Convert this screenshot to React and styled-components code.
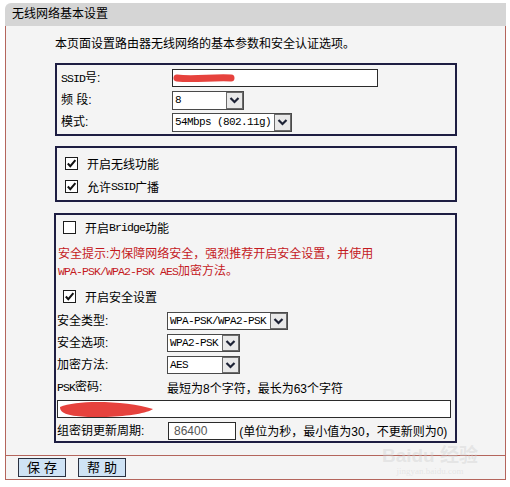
import React from "react";
import styled, { createGlobalStyle } from "styled-components";

const GlobalStyle = createGlobalStyle`
  html, body {
    margin: 0;
    padding: 0;
    background: #ffffff;
  }
  body {
    font-family: "Liberation Sans", "Noto Sans CJK SC", sans-serif;
    font-size: 12px;
    color: #000;
  }
`;

const Frame = styled.div`
  position: relative;
  width: 501px;
  margin: 3px 0 0 5px;
`;

const Header = styled.div`
  height: 23px;
  line-height: 23px;
  padding-left: 7px;
  background: #d5d5d5;
  border-top-left-radius: 6px;
  font-size: 12px;
`;

const Body = styled.div`
  background: #f4f4f4;
  border-left: 1px solid #b4655c;
  border-right: 1px solid #b4655c;
  padding: 11px 0 12px 49px;
`;

const Intro = styled.div`
  line-height: 14px;
  margin-bottom: 12px;
`;

const Panel = styled.div`
  width: ${(p) => p.width || 402}px;
  box-sizing: border-box;
  border: 2px solid #1e1e42;
  padding: ${(p) => p.pad || "0"};
  margin-top: ${(p) => p.gap || 0}px;
  margin-left: ${(p) => p.shift || 0}px;
`;

const Row = styled.div`
  display: flex;
  align-items: center;
  height: ${(p) => p.h || 22}px;
  margin-top: ${(p) => p.mt || 0}px;
`;

const Label = styled.div`
  width: ${(p) => p.w}px;
  flex: none;
  line-height: 14px;
`;

const Ascii = styled.span`
  font-family: "Liberation Mono", monospace;
  font-size: 11.5px;
  letter-spacing: -0.9px;
`;

const TextInput = styled.div`
  position: relative;
  box-sizing: border-box;
  width: ${(p) => p.w}px;
  height: 18px;
  background: #fff;
  border: 1px solid #2b2b2b;
  font-size: 12px;
  line-height: 16px;
  padding-left: 5px;
  color: #555;
  overflow: hidden;
`;

const Scribble = styled.svg`
  position: absolute;
  left: 0;
  top: 0;
  pointer-events: none;
`;

const SelectBox = styled.div`
  display: flex;
  box-sizing: border-box;
  width: ${(p) => p.w}px;
  height: ${(p) => p.h || 18}px;
  background: #fff;
  border: 1px solid #4a4a4a;
`;

const SelectValue = styled.div`
  flex: 1;
  padding-left: 2px;
  font-family: "Liberation Mono", monospace;
  font-size: 11px;
  letter-spacing: -0.6px;
  line-height: ${(p) => (p.h || 18) - 2}px;
  white-space: nowrap;
  overflow: hidden;
`;

const SelectArrow = styled.div`
  flex: none;
  width: 17px;
  box-sizing: border-box;
  border: 1px solid #6b6b6b;
  background: #e9e9e9;
  display: flex;
  align-items: center;
  justify-content: center;
`;

const CheckRow = styled.div`
  display: flex;
  align-items: center;
  height: ${(p) => p.h || 23}px;
  padding-left: ${(p) => p.indent || 8}px;
  margin-top: ${(p) => p.mt || 0}px;
`;

const Box = styled.div`
  width: 13px;
  height: 13px;
  box-sizing: border-box;
  border: 1px solid #1c1c1c;
  background: #fff;
  display: flex;
  align-items: center;
  justify-content: center;
  margin-right: 9px;
`;

const Warning = styled.div`
  color: #c41a1e;
  line-height: 17px;
  margin-top: 8px;
  padding-left: 1px;
`;

const Hint = styled.span`
  font-size: 12px;
`;

const PskField = styled(TextInput)`
  margin-top: 2px;
`;

const Footer = styled.div`
  display: flex;
  gap: 12px;
  height: 25px;
  padding: 2px 0 0 12px;
  box-sizing: border-box;
  background: #f4f4f4;
  border: 1px solid #b4655c;
`;

const Button = styled.div`
  width: 48px;
  height: 19px;
  box-sizing: border-box;
  border: 1px solid #2a3140;
  background: #cfe3f5;
  text-align: center;
  line-height: 17px;
  font-size: 13px;
  letter-spacing: 4px;
  text-indent: 4px;
`;

const Watermark = styled.div`
  position: absolute;
  right: 28px;
  bottom: 4px;
  color: rgba(205, 205, 205, 0.4);
  text-align: center;
  font-family: "Liberation Sans", "Noto Sans CJK SC", sans-serif;
  pointer-events: none;
`;

const MarkBig = styled.div`
  font-size: 19px;
  font-weight: bold;
  line-height: 21px;
`;

const MarkSmall = styled.div`
  font-size: 9px;
  line-height: 10px;
  font-family: "Liberation Serif", serif;
`;

const Chevron = () => (
  <svg width="11" height="8" viewBox="0 0 11 8">
    <path d="M1.5 2 L5.5 6 L9.5 2" fill="none" stroke="#1d2235" strokeWidth="2.2" />
  </svg>
);

const Select = ({ w, h, value }) => (
  <SelectBox w={w} h={h}>
    <SelectValue h={h}>{value}</SelectValue>
    <SelectArrow>
      <Chevron />
    </SelectArrow>
  </SelectBox>
);

const Checkbox = ({ checked }) => (
  <Box>
    {checked && (
      <svg width="11" height="11" viewBox="0 0 11 11">
        <path d="M1.8 5.5 L4.3 8.2 L9.4 2.2" fill="none" stroke="#111" strokeWidth="2" />
      </svg>
    )}
  </Box>
);

const App = () => (
  <>
    <GlobalStyle />
    <Frame>
      <Header>无线网络基本设置</Header>
      <Body>
        <Intro>本页面设置路由器无线网络的基本参数和安全认证选项。</Intro>

        <Panel pad="2px 0 1px 4px">
          <Row>
            <Label w={111}>
              <Ascii>SSID</Ascii>号:
            </Label>
            <TextInput w={206}>
              <Scribble width="206" height="18">
                <path d="M4 8 C20 10, 40 7, 58 8" stroke="#e4322c" strokeWidth="7" strokeLinecap="round" fill="none" opacity="0.92" />
              </Scribble>
            </TextInput>
          </Row>
          <Row>
            <Label w={111}>频 段:</Label>
            <Select w={72} h={19} value="8" />
          </Row>
          <Row>
            <Label w={111}>模式:</Label>
            <Select w={120} h={19} value="54Mbps (802.11g)" />
          </Row>
        </Panel>

        <Panel gap={10} pad="4px 0 2px 0">
          <CheckRow>
            <Checkbox checked />
            开启无线功能
          </CheckRow>
          <CheckRow>
            <Checkbox checked />
            允许<Ascii>SSID</Ascii>广播
          </CheckRow>
        </Panel>

        <Panel gap={11} width={403} shift={-1} pad="1px 0 0 1px">
          <CheckRow h={22} indent={6}>
            <Checkbox />
            开启<Ascii>Bridge</Ascii>功能
          </CheckRow>
          <Warning>
            安全提示:为保障网络安全，强烈推荐开启安全设置，并使用
            <br />
            <Ascii>WPA-PSK/WPA2-PSK AES</Ascii>加密方法。
          </Warning>
          <CheckRow h={22} indent={6} mt={5}>
            <Checkbox checked />
            开启安全设置
          </CheckRow>
          <Row mt={3}>
            <Label w={110}>安全类型:</Label>
            <Select w={121} value="WPA-PSK/WPA2-PSK" />
          </Row>
          <Row>
            <Label w={110}>安全选项:</Label>
            <Select w={73} value="WPA2-PSK" />
          </Row>
          <Row>
            <Label w={110}>加密方法:</Label>
            <Select w={73} value="AES" />
          </Row>
          <Row>
            <Label w={110}>
              <Ascii>PSK</Ascii>密码:
            </Label>
            <Hint>最短为8个字符，最长为63个字符</Hint>
          </Row>
          <PskField w={394}>
            <Scribble width="394" height="18">
              <path d="M2 6 C20 -2, 70 0, 95 8 C88 13, 60 17, 30 16 C12 15, 2 13, 2 6 Z" fill="#e4322c" opacity="0.92" />
            </Scribble>
          </PskField>
          <Row h={21} mt={2}>
            <Label w={111}>组密钥更新周期:</Label>
            <TextInput w={68}>86400</TextInput>
            <Hint>&nbsp;(单位为秒，最小值为30，不更新则为0)</Hint>
          </Row>
        </Panel>
      </Body>
      <Footer>
        <Button>保存</Button>
        <Button>帮助</Button>
      </Footer>
      <Watermark>
        <MarkBig>Baidu 经验</MarkBig>
        <MarkSmall>jingyan.baidu.com</MarkSmall>
      </Watermark>
    </Frame>
  </>
);

export default App;
